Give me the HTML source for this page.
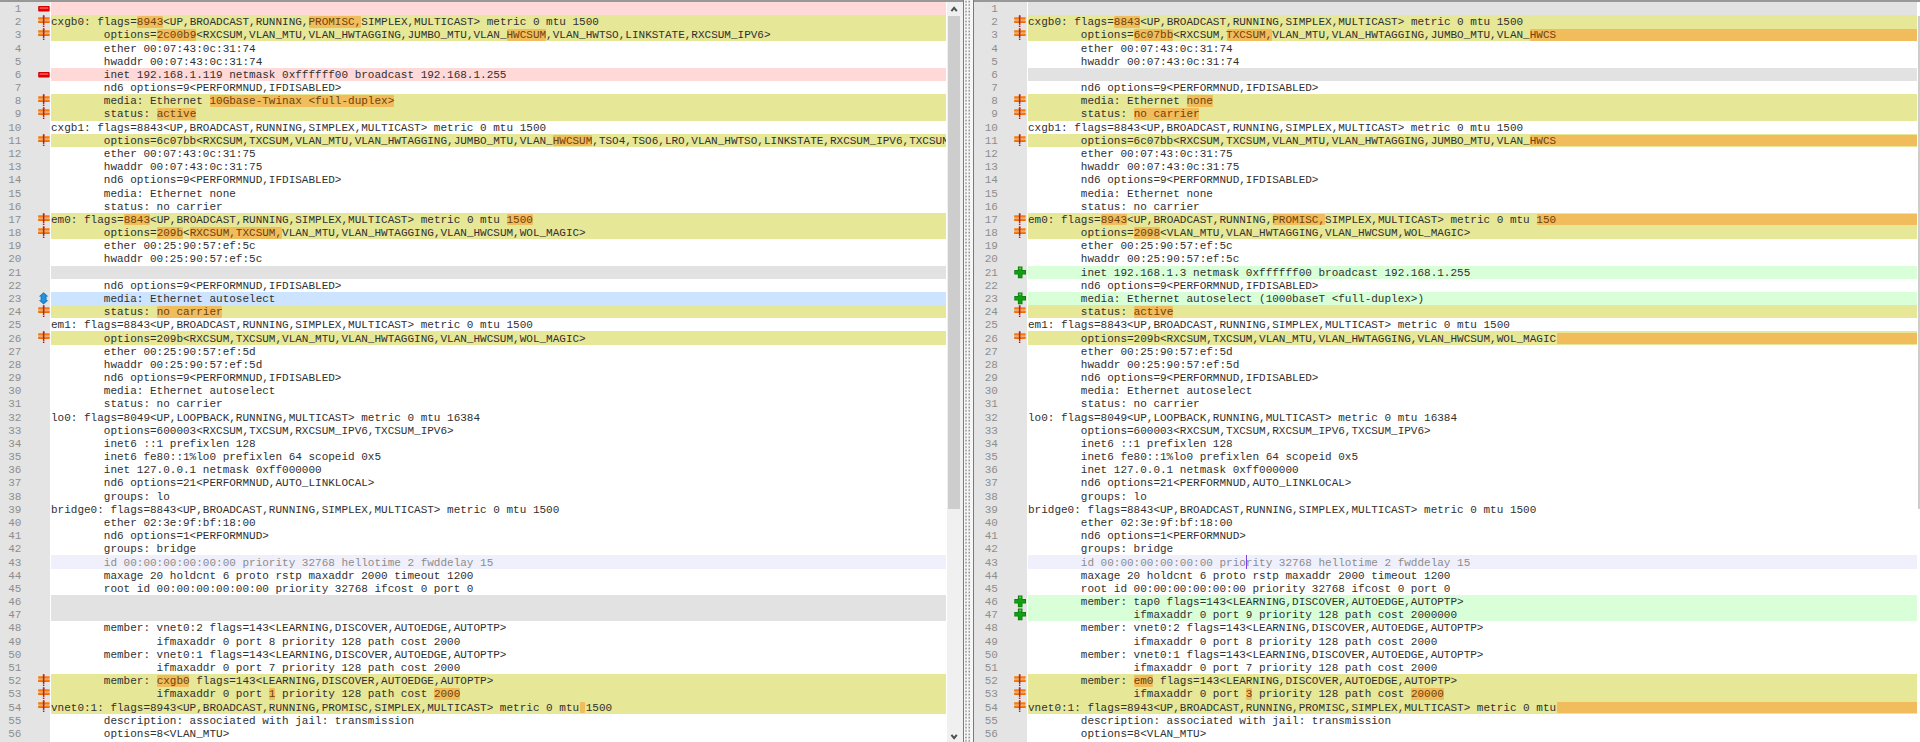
<!DOCTYPE html>
<html><head><meta charset="utf-8"><title>Compare</title><style>
html,body{margin:0;padding:0}
body{width:1920px;height:742px;overflow:hidden;background:#fff;position:relative;font-family:"Liberation Mono",monospace;font-size:11px;line-height:13.18px}
div{position:absolute;box-sizing:border-box}
.gut{top:0;height:742px;background:#E4E4E4}
.bd{height:13.18px}
.hl{height:11.48px;background:#F1BC5B;border-radius:1.2px}
.ln{width:30px;text-align:right;color:#8E8E8E;height:13.18px;white-space:pre}
.tx{white-space:pre;color:#303030;height:13.18px;overflow:hidden}
.tx i{font-style:normal;color:#70420C}
.tx.g{color:#8c8c8c}
.icw{width:12px;height:13px}
.ic{display:block}
</style></head><body>
<div class="gut" style="left:0px;width:50px"></div>
<div class="bd" style="left:50.5px;width:895.5px;top:1.90px;background:#FFD8D8"></div>
<div class="ln" style="left:-8.600000000000001px;top:3.00px">1</div>
<div class="icw" style="left:37.8px;top:1.90px"><svg class="ic" viewBox="0 0 12 13" width="12" height="13"><rect x="0.2" y="3.9" width="11.4" height="5.6" rx="0.8" fill="#C40000"/><rect x="0.9" y="4.6" width="10" height="4.2" rx="0.5" fill="#E60000"/><rect x="1.6" y="5.3" width="8.6" height="1.5" fill="#FF5A5A"/></svg></div>
<div class="bd" style="left:50.5px;width:895.5px;top:15.08px;background:#E7E798"></div>
<div class="hl" style="left:137.40px;width:25.60px;top:16.18px"></div>
<div class="hl" style="left:309.00px;width:52.00px;top:16.18px"></div>
<div class="ln" style="left:-8.600000000000001px;top:16.18px">2</div>
<div class="icw" style="left:37.8px;top:15.08px"><svg class="ic" viewBox="0 0 12 13" width="12" height="13"><rect x="0.4" y="4.3" width="11" height="1.6" fill="#F6B37A" opacity="0.75"/><rect x="0.2" y="2.25" width="11.4" height="2.3" rx="0.5" fill="#F4740A"/><rect x="0.2" y="5.65" width="11.4" height="2.4" rx="0.5" fill="#EE6A00"/><rect x="0.8" y="2.5" width="10.2" height="0.7" fill="#FF962E"/><rect x="0.8" y="5.9" width="10.2" height="0.7" fill="#FF8A20"/><rect x="4.9" y="0.4" width="1.5" height="9.5" fill="#9E2636"/><rect x="4.9" y="0.4" width="1.5" height="1.6" fill="#C8202C"/><rect x="4.9" y="10.6" width="1.5" height="1.4" fill="#C41020"/></svg></div>
<div class="tx" style="left:51px;top:16.18px;width:895px">cxgb0: flags=<i>8943</i>&lt;UP,BROADCAST,RUNNING,<i>PROMISC,</i>SIMPLEX,MULTICAST&gt; metric 0 mtu 1500</div>
<div class="bd" style="left:50.5px;width:895.5px;top:28.26px;background:#E7E798"></div>
<div class="hl" style="left:157.20px;width:38.80px;top:29.36px"></div>
<div class="hl" style="left:507.00px;width:38.80px;top:29.36px"></div>
<div class="ln" style="left:-8.600000000000001px;top:29.36px">3</div>
<div class="icw" style="left:37.8px;top:28.26px"><svg class="ic" viewBox="0 0 12 13" width="12" height="13"><rect x="0.4" y="4.3" width="11" height="1.6" fill="#F6B37A" opacity="0.75"/><rect x="0.2" y="2.25" width="11.4" height="2.3" rx="0.5" fill="#F4740A"/><rect x="0.2" y="5.65" width="11.4" height="2.4" rx="0.5" fill="#EE6A00"/><rect x="0.8" y="2.5" width="10.2" height="0.7" fill="#FF962E"/><rect x="0.8" y="5.9" width="10.2" height="0.7" fill="#FF8A20"/><rect x="4.9" y="0.4" width="1.5" height="9.5" fill="#9E2636"/><rect x="4.9" y="0.4" width="1.5" height="1.6" fill="#C8202C"/><rect x="4.9" y="10.6" width="1.5" height="1.4" fill="#C41020"/></svg></div>
<div class="tx" style="left:51px;top:29.36px;width:895px">        options=<i>2c00b9</i>&lt;RXCSUM,VLAN_MTU,VLAN_HWTAGGING,JUMBO_MTU,VLAN_<i>HWCSUM</i>,VLAN_HWTSO,LINKSTATE,RXCSUM_IPV6&gt;</div>
<div class="ln" style="left:-8.600000000000001px;top:42.54px">4</div>
<div class="tx" style="left:51px;top:42.54px;width:895px">        ether 00:07:43:0c:31:74</div>
<div class="ln" style="left:-8.600000000000001px;top:55.72px">5</div>
<div class="tx" style="left:51px;top:55.72px;width:895px">        hwaddr 00:07:43:0c:31:74</div>
<div class="bd" style="left:50.5px;width:895.5px;top:67.80px;background:#FFD8D8"></div>
<div class="ln" style="left:-8.600000000000001px;top:68.90px">6</div>
<div class="icw" style="left:37.8px;top:67.80px"><svg class="ic" viewBox="0 0 12 13" width="12" height="13"><rect x="0.2" y="3.9" width="11.4" height="5.6" rx="0.8" fill="#C40000"/><rect x="0.9" y="4.6" width="10" height="4.2" rx="0.5" fill="#E60000"/><rect x="1.6" y="5.3" width="8.6" height="1.5" fill="#FF5A5A"/></svg></div>
<div class="tx" style="left:51px;top:68.90px;width:895px">        inet 192.168.1.119 netmask 0xffffff00 broadcast 192.168.1.255</div>
<div class="ln" style="left:-8.600000000000001px;top:82.08px">7</div>
<div class="tx" style="left:51px;top:82.08px;width:895px">        nd6 options=9&lt;PERFORMNUD,IFDISABLED&gt;</div>
<div class="bd" style="left:50.5px;width:895.5px;top:94.16px;background:#E7E798"></div>
<div class="hl" style="left:210.00px;width:184.00px;top:95.26px"></div>
<div class="ln" style="left:-8.600000000000001px;top:95.26px">8</div>
<div class="icw" style="left:37.8px;top:94.16px"><svg class="ic" viewBox="0 0 12 13" width="12" height="13"><rect x="0.4" y="4.3" width="11" height="1.6" fill="#F6B37A" opacity="0.75"/><rect x="0.2" y="2.25" width="11.4" height="2.3" rx="0.5" fill="#F4740A"/><rect x="0.2" y="5.65" width="11.4" height="2.4" rx="0.5" fill="#EE6A00"/><rect x="0.8" y="2.5" width="10.2" height="0.7" fill="#FF962E"/><rect x="0.8" y="5.9" width="10.2" height="0.7" fill="#FF8A20"/><rect x="4.9" y="0.4" width="1.5" height="9.5" fill="#9E2636"/><rect x="4.9" y="0.4" width="1.5" height="1.6" fill="#C8202C"/><rect x="4.9" y="10.6" width="1.5" height="1.4" fill="#C41020"/></svg></div>
<div class="tx" style="left:51px;top:95.26px;width:895px">        media: Ethernet <i>10Gbase-Twinax &lt;full-duplex&gt;</i></div>
<div class="bd" style="left:50.5px;width:895.5px;top:107.34px;background:#E7E798"></div>
<div class="hl" style="left:157.20px;width:38.80px;top:108.44px"></div>
<div class="ln" style="left:-8.600000000000001px;top:108.44px">9</div>
<div class="icw" style="left:37.8px;top:107.34px"><svg class="ic" viewBox="0 0 12 13" width="12" height="13"><rect x="0.4" y="4.3" width="11" height="1.6" fill="#F6B37A" opacity="0.75"/><rect x="0.2" y="2.25" width="11.4" height="2.3" rx="0.5" fill="#F4740A"/><rect x="0.2" y="5.65" width="11.4" height="2.4" rx="0.5" fill="#EE6A00"/><rect x="0.8" y="2.5" width="10.2" height="0.7" fill="#FF962E"/><rect x="0.8" y="5.9" width="10.2" height="0.7" fill="#FF8A20"/><rect x="4.9" y="0.4" width="1.5" height="9.5" fill="#9E2636"/><rect x="4.9" y="0.4" width="1.5" height="1.6" fill="#C8202C"/><rect x="4.9" y="10.6" width="1.5" height="1.4" fill="#C41020"/></svg></div>
<div class="tx" style="left:51px;top:108.44px;width:895px">        status: <i>active</i></div>
<div class="ln" style="left:-8.600000000000001px;top:121.62px">10</div>
<div class="tx" style="left:51px;top:121.62px;width:895px">cxgb1: flags=8843&lt;UP,BROADCAST,RUNNING,SIMPLEX,MULTICAST&gt; metric 0 mtu 1500</div>
<div class="bd" style="left:50.5px;width:895.5px;top:133.70px;background:#E7E798"></div>
<div class="hl" style="left:553.20px;width:38.80px;top:134.80px"></div>
<div class="ln" style="left:-8.600000000000001px;top:134.80px">11</div>
<div class="icw" style="left:37.8px;top:133.70px"><svg class="ic" viewBox="0 0 12 13" width="12" height="13"><rect x="0.4" y="4.3" width="11" height="1.6" fill="#F6B37A" opacity="0.75"/><rect x="0.2" y="2.25" width="11.4" height="2.3" rx="0.5" fill="#F4740A"/><rect x="0.2" y="5.65" width="11.4" height="2.4" rx="0.5" fill="#EE6A00"/><rect x="0.8" y="2.5" width="10.2" height="0.7" fill="#FF962E"/><rect x="0.8" y="5.9" width="10.2" height="0.7" fill="#FF8A20"/><rect x="4.9" y="0.4" width="1.5" height="9.5" fill="#9E2636"/><rect x="4.9" y="0.4" width="1.5" height="1.6" fill="#C8202C"/><rect x="4.9" y="10.6" width="1.5" height="1.4" fill="#C41020"/></svg></div>
<div class="tx" style="left:51px;top:134.80px;width:895px">        options=6c07bb&lt;RXCSUM,TXCSUM,VLAN_MTU,VLAN_HWTAGGING,JUMBO_MTU,VLAN_<i>HWCSUM</i>,TSO4,TSO6,LRO,VLAN_HWTSO,LINKSTATE,RXCSUM_IPV6,TXCSUM_IPV6&gt;</div>
<div class="ln" style="left:-8.600000000000001px;top:147.98px">12</div>
<div class="tx" style="left:51px;top:147.98px;width:895px">        ether 00:07:43:0c:31:75</div>
<div class="ln" style="left:-8.600000000000001px;top:161.16px">13</div>
<div class="tx" style="left:51px;top:161.16px;width:895px">        hwaddr 00:07:43:0c:31:75</div>
<div class="ln" style="left:-8.600000000000001px;top:174.34px">14</div>
<div class="tx" style="left:51px;top:174.34px;width:895px">        nd6 options=9&lt;PERFORMNUD,IFDISABLED&gt;</div>
<div class="ln" style="left:-8.600000000000001px;top:187.52px">15</div>
<div class="tx" style="left:51px;top:187.52px;width:895px">        media: Ethernet none</div>
<div class="ln" style="left:-8.600000000000001px;top:200.70px">16</div>
<div class="tx" style="left:51px;top:200.70px;width:895px">        status: no carrier</div>
<div class="bd" style="left:50.5px;width:895.5px;top:212.78px;background:#E7E798"></div>
<div class="hl" style="left:124.20px;width:25.60px;top:213.88px"></div>
<div class="hl" style="left:507.00px;width:25.60px;top:213.88px"></div>
<div class="ln" style="left:-8.600000000000001px;top:213.88px">17</div>
<div class="icw" style="left:37.8px;top:212.78px"><svg class="ic" viewBox="0 0 12 13" width="12" height="13"><rect x="0.4" y="4.3" width="11" height="1.6" fill="#F6B37A" opacity="0.75"/><rect x="0.2" y="2.25" width="11.4" height="2.3" rx="0.5" fill="#F4740A"/><rect x="0.2" y="5.65" width="11.4" height="2.4" rx="0.5" fill="#EE6A00"/><rect x="0.8" y="2.5" width="10.2" height="0.7" fill="#FF962E"/><rect x="0.8" y="5.9" width="10.2" height="0.7" fill="#FF8A20"/><rect x="4.9" y="0.4" width="1.5" height="9.5" fill="#9E2636"/><rect x="4.9" y="0.4" width="1.5" height="1.6" fill="#C8202C"/><rect x="4.9" y="10.6" width="1.5" height="1.4" fill="#C41020"/></svg></div>
<div class="tx" style="left:51px;top:213.88px;width:895px">em0: flags=<i>8843</i>&lt;UP,BROADCAST,RUNNING,SIMPLEX,MULTICAST&gt; metric 0 mtu <i>1500</i></div>
<div class="bd" style="left:50.5px;width:895.5px;top:225.96px;background:#E7E798"></div>
<div class="hl" style="left:157.20px;width:25.60px;top:227.06px"></div>
<div class="hl" style="left:190.20px;width:91.60px;top:227.06px"></div>
<div class="ln" style="left:-8.600000000000001px;top:227.06px">18</div>
<div class="icw" style="left:37.8px;top:225.96px"><svg class="ic" viewBox="0 0 12 13" width="12" height="13"><rect x="0.4" y="4.3" width="11" height="1.6" fill="#F6B37A" opacity="0.75"/><rect x="0.2" y="2.25" width="11.4" height="2.3" rx="0.5" fill="#F4740A"/><rect x="0.2" y="5.65" width="11.4" height="2.4" rx="0.5" fill="#EE6A00"/><rect x="0.8" y="2.5" width="10.2" height="0.7" fill="#FF962E"/><rect x="0.8" y="5.9" width="10.2" height="0.7" fill="#FF8A20"/><rect x="4.9" y="0.4" width="1.5" height="9.5" fill="#9E2636"/><rect x="4.9" y="0.4" width="1.5" height="1.6" fill="#C8202C"/><rect x="4.9" y="10.6" width="1.5" height="1.4" fill="#C41020"/></svg></div>
<div class="tx" style="left:51px;top:227.06px;width:895px">        options=<i>209b</i>&lt;<i>RXCSUM,TXCSUM,</i>VLAN_MTU,VLAN_HWTAGGING,VLAN_HWCSUM,WOL_MAGIC&gt;</div>
<div class="ln" style="left:-8.600000000000001px;top:240.24px">19</div>
<div class="tx" style="left:51px;top:240.24px;width:895px">        ether 00:25:90:57:ef:5c</div>
<div class="ln" style="left:-8.600000000000001px;top:253.42px">20</div>
<div class="tx" style="left:51px;top:253.42px;width:895px">        hwaddr 00:25:90:57:ef:5c</div>
<div class="bd" style="left:50.5px;width:895.5px;top:265.50px;background:#E2E2E2"></div>
<div class="ln" style="left:-8.600000000000001px;top:266.60px">21</div>
<div class="ln" style="left:-8.600000000000001px;top:279.78px">22</div>
<div class="tx" style="left:51px;top:279.78px;width:895px">        nd6 options=9&lt;PERFORMNUD,IFDISABLED&gt;</div>
<div class="bd" style="left:50.5px;width:895.5px;top:291.86px;background:#CCE4FF"></div>
<div class="ln" style="left:-8.600000000000001px;top:292.96px">23</div>
<div class="icw" style="left:37.8px;top:291.86px"><svg class="ic" viewBox="0 0 12 13" width="12" height="13"><path d="M5.6 0.2L10.4 4.4H8.6V8.2H10.4L5.6 12.4L0.8 8.2H2.6V4.4H0.8Z" fill="#1A7CC8"/><path d="M5.6 1.6L8 3.8H7.4V8.8H8L5.6 11L3.2 8.8H3.8V3.8H3.2Z" fill="#2492DC"/></svg></div>
<div class="tx" style="left:51px;top:292.96px;width:895px">        media: Ethernet autoselect</div>
<div class="bd" style="left:50.5px;width:895.5px;top:305.04px;background:#E7E798"></div>
<div class="hl" style="left:157.20px;width:65.20px;top:306.14px"></div>
<div class="ln" style="left:-8.600000000000001px;top:306.14px">24</div>
<div class="icw" style="left:37.8px;top:305.04px"><svg class="ic" viewBox="0 0 12 13" width="12" height="13"><rect x="0.4" y="4.3" width="11" height="1.6" fill="#F6B37A" opacity="0.75"/><rect x="0.2" y="2.25" width="11.4" height="2.3" rx="0.5" fill="#F4740A"/><rect x="0.2" y="5.65" width="11.4" height="2.4" rx="0.5" fill="#EE6A00"/><rect x="0.8" y="2.5" width="10.2" height="0.7" fill="#FF962E"/><rect x="0.8" y="5.9" width="10.2" height="0.7" fill="#FF8A20"/><rect x="4.9" y="0.4" width="1.5" height="9.5" fill="#9E2636"/><rect x="4.9" y="0.4" width="1.5" height="1.6" fill="#C8202C"/><rect x="4.9" y="10.6" width="1.5" height="1.4" fill="#C41020"/></svg></div>
<div class="tx" style="left:51px;top:306.14px;width:895px">        status: <i>no carrier</i></div>
<div class="ln" style="left:-8.600000000000001px;top:319.32px">25</div>
<div class="tx" style="left:51px;top:319.32px;width:895px">em1: flags=8843&lt;UP,BROADCAST,RUNNING,SIMPLEX,MULTICAST&gt; metric 0 mtu 1500</div>
<div class="bd" style="left:50.5px;width:895.5px;top:331.40px;background:#E7E798"></div>
<div class="ln" style="left:-8.600000000000001px;top:332.50px">26</div>
<div class="icw" style="left:37.8px;top:331.40px"><svg class="ic" viewBox="0 0 12 13" width="12" height="13"><rect x="0.4" y="4.3" width="11" height="1.6" fill="#F6B37A" opacity="0.75"/><rect x="0.2" y="2.25" width="11.4" height="2.3" rx="0.5" fill="#F4740A"/><rect x="0.2" y="5.65" width="11.4" height="2.4" rx="0.5" fill="#EE6A00"/><rect x="0.8" y="2.5" width="10.2" height="0.7" fill="#FF962E"/><rect x="0.8" y="5.9" width="10.2" height="0.7" fill="#FF8A20"/><rect x="4.9" y="0.4" width="1.5" height="9.5" fill="#9E2636"/><rect x="4.9" y="0.4" width="1.5" height="1.6" fill="#C8202C"/><rect x="4.9" y="10.6" width="1.5" height="1.4" fill="#C41020"/></svg></div>
<div class="tx" style="left:51px;top:332.50px;width:895px">        options=209b&lt;RXCSUM,TXCSUM,VLAN_MTU,VLAN_HWTAGGING,VLAN_HWCSUM,WOL_MAGIC&gt;</div>
<div class="ln" style="left:-8.600000000000001px;top:345.68px">27</div>
<div class="tx" style="left:51px;top:345.68px;width:895px">        ether 00:25:90:57:ef:5d</div>
<div class="ln" style="left:-8.600000000000001px;top:358.86px">28</div>
<div class="tx" style="left:51px;top:358.86px;width:895px">        hwaddr 00:25:90:57:ef:5d</div>
<div class="ln" style="left:-8.600000000000001px;top:372.04px">29</div>
<div class="tx" style="left:51px;top:372.04px;width:895px">        nd6 options=9&lt;PERFORMNUD,IFDISABLED&gt;</div>
<div class="ln" style="left:-8.600000000000001px;top:385.22px">30</div>
<div class="tx" style="left:51px;top:385.22px;width:895px">        media: Ethernet autoselect</div>
<div class="ln" style="left:-8.600000000000001px;top:398.40px">31</div>
<div class="tx" style="left:51px;top:398.40px;width:895px">        status: no carrier</div>
<div class="ln" style="left:-8.600000000000001px;top:411.58px">32</div>
<div class="tx" style="left:51px;top:411.58px;width:895px">lo0: flags=8049&lt;UP,LOOPBACK,RUNNING,MULTICAST&gt; metric 0 mtu 16384</div>
<div class="ln" style="left:-8.600000000000001px;top:424.76px">33</div>
<div class="tx" style="left:51px;top:424.76px;width:895px">        options=600003&lt;RXCSUM,TXCSUM,RXCSUM_IPV6,TXCSUM_IPV6&gt;</div>
<div class="ln" style="left:-8.600000000000001px;top:437.94px">34</div>
<div class="tx" style="left:51px;top:437.94px;width:895px">        inet6 ::1 prefixlen 128</div>
<div class="ln" style="left:-8.600000000000001px;top:451.12px">35</div>
<div class="tx" style="left:51px;top:451.12px;width:895px">        inet6 fe80::1%lo0 prefixlen 64 scopeid 0x5</div>
<div class="ln" style="left:-8.600000000000001px;top:464.30px">36</div>
<div class="tx" style="left:51px;top:464.30px;width:895px">        inet 127.0.0.1 netmask 0xff000000</div>
<div class="ln" style="left:-8.600000000000001px;top:477.48px">37</div>
<div class="tx" style="left:51px;top:477.48px;width:895px">        nd6 options=21&lt;PERFORMNUD,AUTO_LINKLOCAL&gt;</div>
<div class="ln" style="left:-8.600000000000001px;top:490.66px">38</div>
<div class="tx" style="left:51px;top:490.66px;width:895px">        groups: lo</div>
<div class="ln" style="left:-8.600000000000001px;top:503.84px">39</div>
<div class="tx" style="left:51px;top:503.84px;width:895px">bridge0: flags=8843&lt;UP,BROADCAST,RUNNING,SIMPLEX,MULTICAST&gt; metric 0 mtu 1500</div>
<div class="ln" style="left:-8.600000000000001px;top:517.02px">40</div>
<div class="tx" style="left:51px;top:517.02px;width:895px">        ether 02:3e:9f:bf:18:00</div>
<div class="ln" style="left:-8.600000000000001px;top:530.20px">41</div>
<div class="tx" style="left:51px;top:530.20px;width:895px">        nd6 options=1&lt;PERFORMNUD&gt;</div>
<div class="ln" style="left:-8.600000000000001px;top:543.38px">42</div>
<div class="tx" style="left:51px;top:543.38px;width:895px">        groups: bridge</div>
<div class="bd" style="left:50.5px;width:895.5px;top:555.46px;background:#F0F0FC"></div>
<div class="ln" style="left:-8.600000000000001px;top:556.56px">43</div>
<div class="tx g" style="left:51px;top:556.56px;width:895px">        id 00:00:00:00:00:00 priority 32768 hellotime 2 fwddelay 15</div>
<div class="ln" style="left:-8.600000000000001px;top:569.74px">44</div>
<div class="tx" style="left:51px;top:569.74px;width:895px">        maxage 20 holdcnt 6 proto rstp maxaddr 2000 timeout 1200</div>
<div class="ln" style="left:-8.600000000000001px;top:582.92px">45</div>
<div class="tx" style="left:51px;top:582.92px;width:895px">        root id 00:00:00:00:00:00 priority 32768 ifcost 0 port 0</div>
<div class="bd" style="left:50.5px;width:895.5px;top:595.00px;background:#E2E2E2"></div>
<div class="ln" style="left:-8.600000000000001px;top:596.10px">46</div>
<div class="bd" style="left:50.5px;width:895.5px;top:608.18px;background:#E2E2E2"></div>
<div class="ln" style="left:-8.600000000000001px;top:609.28px">47</div>
<div class="ln" style="left:-8.600000000000001px;top:622.46px">48</div>
<div class="tx" style="left:51px;top:622.46px;width:895px">        member: vnet0:2 flags=143&lt;LEARNING,DISCOVER,AUTOEDGE,AUTOPTP&gt;</div>
<div class="ln" style="left:-8.600000000000001px;top:635.64px">49</div>
<div class="tx" style="left:51px;top:635.64px;width:895px">                ifmaxaddr 0 port 8 priority 128 path cost 2000</div>
<div class="ln" style="left:-8.600000000000001px;top:648.82px">50</div>
<div class="tx" style="left:51px;top:648.82px;width:895px">        member: vnet0:1 flags=143&lt;LEARNING,DISCOVER,AUTOEDGE,AUTOPTP&gt;</div>
<div class="ln" style="left:-8.600000000000001px;top:662.00px">51</div>
<div class="tx" style="left:51px;top:662.00px;width:895px">                ifmaxaddr 0 port 7 priority 128 path cost 2000</div>
<div class="bd" style="left:50.5px;width:895.5px;top:674.08px;background:#E7E798"></div>
<div class="hl" style="left:157.20px;width:32.20px;top:675.18px"></div>
<div class="ln" style="left:-8.600000000000001px;top:675.18px">52</div>
<div class="icw" style="left:37.8px;top:674.08px"><svg class="ic" viewBox="0 0 12 13" width="12" height="13"><rect x="0.4" y="4.3" width="11" height="1.6" fill="#F6B37A" opacity="0.75"/><rect x="0.2" y="2.25" width="11.4" height="2.3" rx="0.5" fill="#F4740A"/><rect x="0.2" y="5.65" width="11.4" height="2.4" rx="0.5" fill="#EE6A00"/><rect x="0.8" y="2.5" width="10.2" height="0.7" fill="#FF962E"/><rect x="0.8" y="5.9" width="10.2" height="0.7" fill="#FF8A20"/><rect x="4.9" y="0.4" width="1.5" height="9.5" fill="#9E2636"/><rect x="4.9" y="0.4" width="1.5" height="1.6" fill="#C8202C"/><rect x="4.9" y="10.6" width="1.5" height="1.4" fill="#C41020"/></svg></div>
<div class="tx" style="left:51px;top:675.18px;width:895px">        member: <i>cxgb0</i> flags=143&lt;LEARNING,DISCOVER,AUTOEDGE,AUTOPTP&gt;</div>
<div class="bd" style="left:50.5px;width:895.5px;top:687.26px;background:#E7E798"></div>
<div class="hl" style="left:269.40px;width:5.80px;top:688.36px"></div>
<div class="hl" style="left:434.40px;width:25.60px;top:688.36px"></div>
<div class="ln" style="left:-8.600000000000001px;top:688.36px">53</div>
<div class="icw" style="left:37.8px;top:687.26px"><svg class="ic" viewBox="0 0 12 13" width="12" height="13"><rect x="0.4" y="4.3" width="11" height="1.6" fill="#F6B37A" opacity="0.75"/><rect x="0.2" y="2.25" width="11.4" height="2.3" rx="0.5" fill="#F4740A"/><rect x="0.2" y="5.65" width="11.4" height="2.4" rx="0.5" fill="#EE6A00"/><rect x="0.8" y="2.5" width="10.2" height="0.7" fill="#FF962E"/><rect x="0.8" y="5.9" width="10.2" height="0.7" fill="#FF8A20"/><rect x="4.9" y="0.4" width="1.5" height="9.5" fill="#9E2636"/><rect x="4.9" y="0.4" width="1.5" height="1.6" fill="#C8202C"/><rect x="4.9" y="10.6" width="1.5" height="1.4" fill="#C41020"/></svg></div>
<div class="tx" style="left:51px;top:688.36px;width:895px">                ifmaxaddr 0 port <i>1</i> priority 128 path cost <i>2000</i></div>
<div class="bd" style="left:50.5px;width:895.5px;top:700.44px;background:#E7E798"></div>
<div class="hl" style="left:579.60px;width:5.80px;top:701.54px"></div>
<div class="ln" style="left:-8.600000000000001px;top:701.54px">54</div>
<div class="icw" style="left:37.8px;top:700.44px"><svg class="ic" viewBox="0 0 12 13" width="12" height="13"><rect x="0.4" y="4.3" width="11" height="1.6" fill="#F6B37A" opacity="0.75"/><rect x="0.2" y="2.25" width="11.4" height="2.3" rx="0.5" fill="#F4740A"/><rect x="0.2" y="5.65" width="11.4" height="2.4" rx="0.5" fill="#EE6A00"/><rect x="0.8" y="2.5" width="10.2" height="0.7" fill="#FF962E"/><rect x="0.8" y="5.9" width="10.2" height="0.7" fill="#FF8A20"/><rect x="4.9" y="0.4" width="1.5" height="9.5" fill="#9E2636"/><rect x="4.9" y="0.4" width="1.5" height="1.6" fill="#C8202C"/><rect x="4.9" y="10.6" width="1.5" height="1.4" fill="#C41020"/></svg></div>
<div class="tx" style="left:51px;top:701.54px;width:895px">vnet0:1: flags=8943&lt;UP,BROADCAST,RUNNING,PROMISC,SIMPLEX,MULTICAST&gt; metric 0 mtu<i> </i>1500</div>
<div class="ln" style="left:-8.600000000000001px;top:714.72px">55</div>
<div class="tx" style="left:51px;top:714.72px;width:895px">        description: associated with jail: transmission</div>
<div class="ln" style="left:-8.600000000000001px;top:727.90px">56</div>
<div class="tx" style="left:51px;top:727.90px;width:895px">        options=8&lt;VLAN_MTU&gt;</div>
<div class="gut" style="left:974px;width:53px"></div>
<div class="bd" style="left:1027.5px;width:889.5px;top:1.90px;background:#E2E2E2"></div>
<div class="ln" style="left:967.9px;top:3.00px">1</div>
<div class="bd" style="left:1027.5px;width:889.5px;top:15.08px;background:#E7E798"></div>
<div class="hl" style="left:1114.40px;width:25.60px;top:16.18px"></div>
<div class="ln" style="left:967.9px;top:16.18px">2</div>
<div class="icw" style="left:1014.4px;top:15.08px"><svg class="ic" viewBox="0 0 12 13" width="12" height="13"><rect x="0.4" y="4.3" width="11" height="1.6" fill="#F6B37A" opacity="0.75"/><rect x="0.2" y="2.25" width="11.4" height="2.3" rx="0.5" fill="#F4740A"/><rect x="0.2" y="5.65" width="11.4" height="2.4" rx="0.5" fill="#EE6A00"/><rect x="0.8" y="2.5" width="10.2" height="0.7" fill="#FF962E"/><rect x="0.8" y="5.9" width="10.2" height="0.7" fill="#FF8A20"/><rect x="4.9" y="0.4" width="1.5" height="9.5" fill="#9E2636"/><rect x="4.9" y="0.4" width="1.5" height="1.6" fill="#C8202C"/><rect x="4.9" y="10.6" width="1.5" height="1.4" fill="#C41020"/></svg></div>
<div class="tx" style="left:1028px;top:16.18px;width:889px">cxgb0: flags=<i>8843</i>&lt;UP,BROADCAST,RUNNING,SIMPLEX,MULTICAST&gt; metric 0 mtu 1500</div>
<div class="bd" style="left:1027.5px;width:889.5px;top:28.26px;background:#E7E798"></div>
<div class="hl" style="left:1134.20px;width:38.80px;top:29.36px"></div>
<div class="hl" style="left:1226.60px;width:45.40px;top:29.36px"></div>
<div class="hl" style="left:1530.20px;width:386.80px;top:29.36px;border-radius:1px 0 0 1px"></div>
<div class="ln" style="left:967.9px;top:29.36px">3</div>
<div class="icw" style="left:1014.4px;top:28.26px"><svg class="ic" viewBox="0 0 12 13" width="12" height="13"><rect x="0.4" y="4.3" width="11" height="1.6" fill="#F6B37A" opacity="0.75"/><rect x="0.2" y="2.25" width="11.4" height="2.3" rx="0.5" fill="#F4740A"/><rect x="0.2" y="5.65" width="11.4" height="2.4" rx="0.5" fill="#EE6A00"/><rect x="0.8" y="2.5" width="10.2" height="0.7" fill="#FF962E"/><rect x="0.8" y="5.9" width="10.2" height="0.7" fill="#FF8A20"/><rect x="4.9" y="0.4" width="1.5" height="9.5" fill="#9E2636"/><rect x="4.9" y="0.4" width="1.5" height="1.6" fill="#C8202C"/><rect x="4.9" y="10.6" width="1.5" height="1.4" fill="#C41020"/></svg></div>
<div class="tx" style="left:1028px;top:29.36px;width:889px">        options=<i>6c07bb</i>&lt;RXCSUM,<i>TXCSUM,</i>VLAN_MTU,VLAN_HWTAGGING,JUMBO_MTU,VLAN_<i>HWCS</i></div>
<div class="ln" style="left:967.9px;top:42.54px">4</div>
<div class="tx" style="left:1028px;top:42.54px;width:889px">        ether 00:07:43:0c:31:74</div>
<div class="ln" style="left:967.9px;top:55.72px">5</div>
<div class="tx" style="left:1028px;top:55.72px;width:889px">        hwaddr 00:07:43:0c:31:74</div>
<div class="bd" style="left:1027.5px;width:889.5px;top:67.80px;background:#E2E2E2"></div>
<div class="ln" style="left:967.9px;top:68.90px">6</div>
<div class="ln" style="left:967.9px;top:82.08px">7</div>
<div class="tx" style="left:1028px;top:82.08px;width:889px">        nd6 options=9&lt;PERFORMNUD,IFDISABLED&gt;</div>
<div class="bd" style="left:1027.5px;width:889.5px;top:94.16px;background:#E7E798"></div>
<div class="hl" style="left:1187.00px;width:25.60px;top:95.26px"></div>
<div class="ln" style="left:967.9px;top:95.26px">8</div>
<div class="icw" style="left:1014.4px;top:94.16px"><svg class="ic" viewBox="0 0 12 13" width="12" height="13"><rect x="0.4" y="4.3" width="11" height="1.6" fill="#F6B37A" opacity="0.75"/><rect x="0.2" y="2.25" width="11.4" height="2.3" rx="0.5" fill="#F4740A"/><rect x="0.2" y="5.65" width="11.4" height="2.4" rx="0.5" fill="#EE6A00"/><rect x="0.8" y="2.5" width="10.2" height="0.7" fill="#FF962E"/><rect x="0.8" y="5.9" width="10.2" height="0.7" fill="#FF8A20"/><rect x="4.9" y="0.4" width="1.5" height="9.5" fill="#9E2636"/><rect x="4.9" y="0.4" width="1.5" height="1.6" fill="#C8202C"/><rect x="4.9" y="10.6" width="1.5" height="1.4" fill="#C41020"/></svg></div>
<div class="tx" style="left:1028px;top:95.26px;width:889px">        media: Ethernet <i>none</i></div>
<div class="bd" style="left:1027.5px;width:889.5px;top:107.34px;background:#E7E798"></div>
<div class="hl" style="left:1134.20px;width:65.20px;top:108.44px"></div>
<div class="ln" style="left:967.9px;top:108.44px">9</div>
<div class="icw" style="left:1014.4px;top:107.34px"><svg class="ic" viewBox="0 0 12 13" width="12" height="13"><rect x="0.4" y="4.3" width="11" height="1.6" fill="#F6B37A" opacity="0.75"/><rect x="0.2" y="2.25" width="11.4" height="2.3" rx="0.5" fill="#F4740A"/><rect x="0.2" y="5.65" width="11.4" height="2.4" rx="0.5" fill="#EE6A00"/><rect x="0.8" y="2.5" width="10.2" height="0.7" fill="#FF962E"/><rect x="0.8" y="5.9" width="10.2" height="0.7" fill="#FF8A20"/><rect x="4.9" y="0.4" width="1.5" height="9.5" fill="#9E2636"/><rect x="4.9" y="0.4" width="1.5" height="1.6" fill="#C8202C"/><rect x="4.9" y="10.6" width="1.5" height="1.4" fill="#C41020"/></svg></div>
<div class="tx" style="left:1028px;top:108.44px;width:889px">        status: <i>no carrier</i></div>
<div class="ln" style="left:967.9px;top:121.62px">10</div>
<div class="tx" style="left:1028px;top:121.62px;width:889px">cxgb1: flags=8843&lt;UP,BROADCAST,RUNNING,SIMPLEX,MULTICAST&gt; metric 0 mtu 1500</div>
<div class="bd" style="left:1027.5px;width:889.5px;top:133.70px;background:#E7E798"></div>
<div class="hl" style="left:1530.20px;width:386.80px;top:134.80px;border-radius:1px 0 0 1px"></div>
<div class="ln" style="left:967.9px;top:134.80px">11</div>
<div class="icw" style="left:1014.4px;top:133.70px"><svg class="ic" viewBox="0 0 12 13" width="12" height="13"><rect x="0.4" y="4.3" width="11" height="1.6" fill="#F6B37A" opacity="0.75"/><rect x="0.2" y="2.25" width="11.4" height="2.3" rx="0.5" fill="#F4740A"/><rect x="0.2" y="5.65" width="11.4" height="2.4" rx="0.5" fill="#EE6A00"/><rect x="0.8" y="2.5" width="10.2" height="0.7" fill="#FF962E"/><rect x="0.8" y="5.9" width="10.2" height="0.7" fill="#FF8A20"/><rect x="4.9" y="0.4" width="1.5" height="9.5" fill="#9E2636"/><rect x="4.9" y="0.4" width="1.5" height="1.6" fill="#C8202C"/><rect x="4.9" y="10.6" width="1.5" height="1.4" fill="#C41020"/></svg></div>
<div class="tx" style="left:1028px;top:134.80px;width:889px">        options=6c07bb&lt;RXCSUM,TXCSUM,VLAN_MTU,VLAN_HWTAGGING,JUMBO_MTU,VLAN_<i>HWCS</i></div>
<div class="ln" style="left:967.9px;top:147.98px">12</div>
<div class="tx" style="left:1028px;top:147.98px;width:889px">        ether 00:07:43:0c:31:75</div>
<div class="ln" style="left:967.9px;top:161.16px">13</div>
<div class="tx" style="left:1028px;top:161.16px;width:889px">        hwaddr 00:07:43:0c:31:75</div>
<div class="ln" style="left:967.9px;top:174.34px">14</div>
<div class="tx" style="left:1028px;top:174.34px;width:889px">        nd6 options=9&lt;PERFORMNUD,IFDISABLED&gt;</div>
<div class="ln" style="left:967.9px;top:187.52px">15</div>
<div class="tx" style="left:1028px;top:187.52px;width:889px">        media: Ethernet none</div>
<div class="ln" style="left:967.9px;top:200.70px">16</div>
<div class="tx" style="left:1028px;top:200.70px;width:889px">        status: no carrier</div>
<div class="bd" style="left:1027.5px;width:889.5px;top:212.78px;background:#E7E798"></div>
<div class="hl" style="left:1101.20px;width:25.60px;top:213.88px"></div>
<div class="hl" style="left:1272.80px;width:52.00px;top:213.88px"></div>
<div class="hl" style="left:1536.80px;width:380.20px;top:213.88px;border-radius:1px 0 0 1px"></div>
<div class="ln" style="left:967.9px;top:213.88px">17</div>
<div class="icw" style="left:1014.4px;top:212.78px"><svg class="ic" viewBox="0 0 12 13" width="12" height="13"><rect x="0.4" y="4.3" width="11" height="1.6" fill="#F6B37A" opacity="0.75"/><rect x="0.2" y="2.25" width="11.4" height="2.3" rx="0.5" fill="#F4740A"/><rect x="0.2" y="5.65" width="11.4" height="2.4" rx="0.5" fill="#EE6A00"/><rect x="0.8" y="2.5" width="10.2" height="0.7" fill="#FF962E"/><rect x="0.8" y="5.9" width="10.2" height="0.7" fill="#FF8A20"/><rect x="4.9" y="0.4" width="1.5" height="9.5" fill="#9E2636"/><rect x="4.9" y="0.4" width="1.5" height="1.6" fill="#C8202C"/><rect x="4.9" y="10.6" width="1.5" height="1.4" fill="#C41020"/></svg></div>
<div class="tx" style="left:1028px;top:213.88px;width:889px">em0: flags=<i>8943</i>&lt;UP,BROADCAST,RUNNING,<i>PROMISC,</i>SIMPLEX,MULTICAST&gt; metric 0 mtu <i>150</i></div>
<div class="bd" style="left:1027.5px;width:889.5px;top:225.96px;background:#E7E798"></div>
<div class="hl" style="left:1134.20px;width:25.60px;top:227.06px"></div>
<div class="ln" style="left:967.9px;top:227.06px">18</div>
<div class="icw" style="left:1014.4px;top:225.96px"><svg class="ic" viewBox="0 0 12 13" width="12" height="13"><rect x="0.4" y="4.3" width="11" height="1.6" fill="#F6B37A" opacity="0.75"/><rect x="0.2" y="2.25" width="11.4" height="2.3" rx="0.5" fill="#F4740A"/><rect x="0.2" y="5.65" width="11.4" height="2.4" rx="0.5" fill="#EE6A00"/><rect x="0.8" y="2.5" width="10.2" height="0.7" fill="#FF962E"/><rect x="0.8" y="5.9" width="10.2" height="0.7" fill="#FF8A20"/><rect x="4.9" y="0.4" width="1.5" height="9.5" fill="#9E2636"/><rect x="4.9" y="0.4" width="1.5" height="1.6" fill="#C8202C"/><rect x="4.9" y="10.6" width="1.5" height="1.4" fill="#C41020"/></svg></div>
<div class="tx" style="left:1028px;top:227.06px;width:889px">        options=<i>2098</i>&lt;VLAN_MTU,VLAN_HWTAGGING,VLAN_HWCSUM,WOL_MAGIC&gt;</div>
<div class="ln" style="left:967.9px;top:240.24px">19</div>
<div class="tx" style="left:1028px;top:240.24px;width:889px">        ether 00:25:90:57:ef:5c</div>
<div class="ln" style="left:967.9px;top:253.42px">20</div>
<div class="tx" style="left:1028px;top:253.42px;width:889px">        hwaddr 00:25:90:57:ef:5c</div>
<div class="bd" style="left:1027.5px;width:889.5px;top:265.50px;background:#D8FFD8"></div>
<div class="ln" style="left:967.9px;top:266.60px">21</div>
<div class="icw" style="left:1014.4px;top:265.50px"><svg class="ic" viewBox="0 0 12 13" width="12" height="13"><path d="M3.9 0.4h4.6v3.6h3.5v4.6h-3.5v3.6h-4.6v-3.6h-3.6v-4.6h3.6z" fill="#0C7C0C"/><path d="M4.7 1.2h3v3.6h3.5v3h-3.5v3.6h-3v-3.6h-3.6v-3h3.6z" fill="#10A010"/><path d="M5.2 1.7h2v1.4h-2z" fill="#5CD05C"/></svg></div>
<div class="tx" style="left:1028px;top:266.60px;width:889px">        inet 192.168.1.3 netmask 0xffffff00 broadcast 192.168.1.255</div>
<div class="ln" style="left:967.9px;top:279.78px">22</div>
<div class="tx" style="left:1028px;top:279.78px;width:889px">        nd6 options=9&lt;PERFORMNUD,IFDISABLED&gt;</div>
<div class="bd" style="left:1027.5px;width:889.5px;top:291.86px;background:#D8FFD8"></div>
<div class="ln" style="left:967.9px;top:292.96px">23</div>
<div class="icw" style="left:1014.4px;top:291.86px"><svg class="ic" viewBox="0 0 12 13" width="12" height="13"><path d="M3.9 0.4h4.6v3.6h3.5v4.6h-3.5v3.6h-4.6v-3.6h-3.6v-4.6h3.6z" fill="#0C7C0C"/><path d="M4.7 1.2h3v3.6h3.5v3h-3.5v3.6h-3v-3.6h-3.6v-3h3.6z" fill="#10A010"/><path d="M5.2 1.7h2v1.4h-2z" fill="#5CD05C"/></svg></div>
<div class="tx" style="left:1028px;top:292.96px;width:889px">        media: Ethernet autoselect (1000baseT &lt;full-duplex&gt;)</div>
<div class="bd" style="left:1027.5px;width:889.5px;top:305.04px;background:#E7E798"></div>
<div class="hl" style="left:1134.20px;width:38.80px;top:306.14px"></div>
<div class="ln" style="left:967.9px;top:306.14px">24</div>
<div class="icw" style="left:1014.4px;top:305.04px"><svg class="ic" viewBox="0 0 12 13" width="12" height="13"><rect x="0.4" y="4.3" width="11" height="1.6" fill="#F6B37A" opacity="0.75"/><rect x="0.2" y="2.25" width="11.4" height="2.3" rx="0.5" fill="#F4740A"/><rect x="0.2" y="5.65" width="11.4" height="2.4" rx="0.5" fill="#EE6A00"/><rect x="0.8" y="2.5" width="10.2" height="0.7" fill="#FF962E"/><rect x="0.8" y="5.9" width="10.2" height="0.7" fill="#FF8A20"/><rect x="4.9" y="0.4" width="1.5" height="9.5" fill="#9E2636"/><rect x="4.9" y="0.4" width="1.5" height="1.6" fill="#C8202C"/><rect x="4.9" y="10.6" width="1.5" height="1.4" fill="#C41020"/></svg></div>
<div class="tx" style="left:1028px;top:306.14px;width:889px">        status: <i>active</i></div>
<div class="ln" style="left:967.9px;top:319.32px">25</div>
<div class="tx" style="left:1028px;top:319.32px;width:889px">em1: flags=8843&lt;UP,BROADCAST,RUNNING,SIMPLEX,MULTICAST&gt; metric 0 mtu 1500</div>
<div class="bd" style="left:1027.5px;width:889.5px;top:331.40px;background:#E7E798"></div>
<div class="hl" style="left:1556.60px;width:360.40px;top:332.50px;border-radius:1px 0 0 1px"></div>
<div class="ln" style="left:967.9px;top:332.50px">26</div>
<div class="icw" style="left:1014.4px;top:331.40px"><svg class="ic" viewBox="0 0 12 13" width="12" height="13"><rect x="0.4" y="4.3" width="11" height="1.6" fill="#F6B37A" opacity="0.75"/><rect x="0.2" y="2.25" width="11.4" height="2.3" rx="0.5" fill="#F4740A"/><rect x="0.2" y="5.65" width="11.4" height="2.4" rx="0.5" fill="#EE6A00"/><rect x="0.8" y="2.5" width="10.2" height="0.7" fill="#FF962E"/><rect x="0.8" y="5.9" width="10.2" height="0.7" fill="#FF8A20"/><rect x="4.9" y="0.4" width="1.5" height="9.5" fill="#9E2636"/><rect x="4.9" y="0.4" width="1.5" height="1.6" fill="#C8202C"/><rect x="4.9" y="10.6" width="1.5" height="1.4" fill="#C41020"/></svg></div>
<div class="tx" style="left:1028px;top:332.50px;width:889px">        options=209b&lt;RXCSUM,TXCSUM,VLAN_MTU,VLAN_HWTAGGING,VLAN_HWCSUM,WOL_MAGIC</div>
<div class="ln" style="left:967.9px;top:345.68px">27</div>
<div class="tx" style="left:1028px;top:345.68px;width:889px">        ether 00:25:90:57:ef:5d</div>
<div class="ln" style="left:967.9px;top:358.86px">28</div>
<div class="tx" style="left:1028px;top:358.86px;width:889px">        hwaddr 00:25:90:57:ef:5d</div>
<div class="ln" style="left:967.9px;top:372.04px">29</div>
<div class="tx" style="left:1028px;top:372.04px;width:889px">        nd6 options=9&lt;PERFORMNUD,IFDISABLED&gt;</div>
<div class="ln" style="left:967.9px;top:385.22px">30</div>
<div class="tx" style="left:1028px;top:385.22px;width:889px">        media: Ethernet autoselect</div>
<div class="ln" style="left:967.9px;top:398.40px">31</div>
<div class="tx" style="left:1028px;top:398.40px;width:889px">        status: no carrier</div>
<div class="ln" style="left:967.9px;top:411.58px">32</div>
<div class="tx" style="left:1028px;top:411.58px;width:889px">lo0: flags=8049&lt;UP,LOOPBACK,RUNNING,MULTICAST&gt; metric 0 mtu 16384</div>
<div class="ln" style="left:967.9px;top:424.76px">33</div>
<div class="tx" style="left:1028px;top:424.76px;width:889px">        options=600003&lt;RXCSUM,TXCSUM,RXCSUM_IPV6,TXCSUM_IPV6&gt;</div>
<div class="ln" style="left:967.9px;top:437.94px">34</div>
<div class="tx" style="left:1028px;top:437.94px;width:889px">        inet6 ::1 prefixlen 128</div>
<div class="ln" style="left:967.9px;top:451.12px">35</div>
<div class="tx" style="left:1028px;top:451.12px;width:889px">        inet6 fe80::1%lo0 prefixlen 64 scopeid 0x5</div>
<div class="ln" style="left:967.9px;top:464.30px">36</div>
<div class="tx" style="left:1028px;top:464.30px;width:889px">        inet 127.0.0.1 netmask 0xff000000</div>
<div class="ln" style="left:967.9px;top:477.48px">37</div>
<div class="tx" style="left:1028px;top:477.48px;width:889px">        nd6 options=21&lt;PERFORMNUD,AUTO_LINKLOCAL&gt;</div>
<div class="ln" style="left:967.9px;top:490.66px">38</div>
<div class="tx" style="left:1028px;top:490.66px;width:889px">        groups: lo</div>
<div class="ln" style="left:967.9px;top:503.84px">39</div>
<div class="tx" style="left:1028px;top:503.84px;width:889px">bridge0: flags=8843&lt;UP,BROADCAST,RUNNING,SIMPLEX,MULTICAST&gt; metric 0 mtu 1500</div>
<div class="ln" style="left:967.9px;top:517.02px">40</div>
<div class="tx" style="left:1028px;top:517.02px;width:889px">        ether 02:3e:9f:bf:18:00</div>
<div class="ln" style="left:967.9px;top:530.20px">41</div>
<div class="tx" style="left:1028px;top:530.20px;width:889px">        nd6 options=1&lt;PERFORMNUD&gt;</div>
<div class="ln" style="left:967.9px;top:543.38px">42</div>
<div class="tx" style="left:1028px;top:543.38px;width:889px">        groups: bridge</div>
<div class="bd" style="left:1027.5px;width:889.5px;top:555.46px;background:#F0F0FC"></div>
<div class="ln" style="left:967.9px;top:556.56px">43</div>
<div class="tx g" style="left:1028px;top:556.56px;width:889px">        id 00:00:00:00:00:00 priority 32768 hellotime 2 fwddelay 15</div>
<div class="ln" style="left:967.9px;top:569.74px">44</div>
<div class="tx" style="left:1028px;top:569.74px;width:889px">        maxage 20 holdcnt 6 proto rstp maxaddr 2000 timeout 1200</div>
<div class="ln" style="left:967.9px;top:582.92px">45</div>
<div class="tx" style="left:1028px;top:582.92px;width:889px">        root id 00:00:00:00:00:00 priority 32768 ifcost 0 port 0</div>
<div class="bd" style="left:1027.5px;width:889.5px;top:595.00px;background:#D8FFD8"></div>
<div class="ln" style="left:967.9px;top:596.10px">46</div>
<div class="icw" style="left:1014.4px;top:595.00px"><svg class="ic" viewBox="0 0 12 13" width="12" height="13"><path d="M3.9 0.4h4.6v3.6h3.5v4.6h-3.5v3.6h-4.6v-3.6h-3.6v-4.6h3.6z" fill="#0C7C0C"/><path d="M4.7 1.2h3v3.6h3.5v3h-3.5v3.6h-3v-3.6h-3.6v-3h3.6z" fill="#10A010"/><path d="M5.2 1.7h2v1.4h-2z" fill="#5CD05C"/></svg></div>
<div class="tx" style="left:1028px;top:596.10px;width:889px">        member: tap0 flags=143&lt;LEARNING,DISCOVER,AUTOEDGE,AUTOPTP&gt;</div>
<div class="bd" style="left:1027.5px;width:889.5px;top:608.18px;background:#D8FFD8"></div>
<div class="ln" style="left:967.9px;top:609.28px">47</div>
<div class="icw" style="left:1014.4px;top:608.18px"><svg class="ic" viewBox="0 0 12 13" width="12" height="13"><path d="M3.9 0.4h4.6v3.6h3.5v4.6h-3.5v3.6h-4.6v-3.6h-3.6v-4.6h3.6z" fill="#0C7C0C"/><path d="M4.7 1.2h3v3.6h3.5v3h-3.5v3.6h-3v-3.6h-3.6v-3h3.6z" fill="#10A010"/><path d="M5.2 1.7h2v1.4h-2z" fill="#5CD05C"/></svg></div>
<div class="tx" style="left:1028px;top:609.28px;width:889px">                ifmaxaddr 0 port 9 priority 128 path cost 2000000</div>
<div class="ln" style="left:967.9px;top:622.46px">48</div>
<div class="tx" style="left:1028px;top:622.46px;width:889px">        member: vnet0:2 flags=143&lt;LEARNING,DISCOVER,AUTOEDGE,AUTOPTP&gt;</div>
<div class="ln" style="left:967.9px;top:635.64px">49</div>
<div class="tx" style="left:1028px;top:635.64px;width:889px">                ifmaxaddr 0 port 8 priority 128 path cost 2000</div>
<div class="ln" style="left:967.9px;top:648.82px">50</div>
<div class="tx" style="left:1028px;top:648.82px;width:889px">        member: vnet0:1 flags=143&lt;LEARNING,DISCOVER,AUTOEDGE,AUTOPTP&gt;</div>
<div class="ln" style="left:967.9px;top:662.00px">51</div>
<div class="tx" style="left:1028px;top:662.00px;width:889px">                ifmaxaddr 0 port 7 priority 128 path cost 2000</div>
<div class="bd" style="left:1027.5px;width:889.5px;top:674.08px;background:#E7E798"></div>
<div class="hl" style="left:1134.20px;width:19.00px;top:675.18px"></div>
<div class="ln" style="left:967.9px;top:675.18px">52</div>
<div class="icw" style="left:1014.4px;top:674.08px"><svg class="ic" viewBox="0 0 12 13" width="12" height="13"><rect x="0.4" y="4.3" width="11" height="1.6" fill="#F6B37A" opacity="0.75"/><rect x="0.2" y="2.25" width="11.4" height="2.3" rx="0.5" fill="#F4740A"/><rect x="0.2" y="5.65" width="11.4" height="2.4" rx="0.5" fill="#EE6A00"/><rect x="0.8" y="2.5" width="10.2" height="0.7" fill="#FF962E"/><rect x="0.8" y="5.9" width="10.2" height="0.7" fill="#FF8A20"/><rect x="4.9" y="0.4" width="1.5" height="9.5" fill="#9E2636"/><rect x="4.9" y="0.4" width="1.5" height="1.6" fill="#C8202C"/><rect x="4.9" y="10.6" width="1.5" height="1.4" fill="#C41020"/></svg></div>
<div class="tx" style="left:1028px;top:675.18px;width:889px">        member: <i>em0</i> flags=143&lt;LEARNING,DISCOVER,AUTOEDGE,AUTOPTP&gt;</div>
<div class="bd" style="left:1027.5px;width:889.5px;top:687.26px;background:#E7E798"></div>
<div class="hl" style="left:1246.40px;width:5.80px;top:688.36px"></div>
<div class="hl" style="left:1411.40px;width:32.20px;top:688.36px"></div>
<div class="ln" style="left:967.9px;top:688.36px">53</div>
<div class="icw" style="left:1014.4px;top:687.26px"><svg class="ic" viewBox="0 0 12 13" width="12" height="13"><rect x="0.4" y="4.3" width="11" height="1.6" fill="#F6B37A" opacity="0.75"/><rect x="0.2" y="2.25" width="11.4" height="2.3" rx="0.5" fill="#F4740A"/><rect x="0.2" y="5.65" width="11.4" height="2.4" rx="0.5" fill="#EE6A00"/><rect x="0.8" y="2.5" width="10.2" height="0.7" fill="#FF962E"/><rect x="0.8" y="5.9" width="10.2" height="0.7" fill="#FF8A20"/><rect x="4.9" y="0.4" width="1.5" height="9.5" fill="#9E2636"/><rect x="4.9" y="0.4" width="1.5" height="1.6" fill="#C8202C"/><rect x="4.9" y="10.6" width="1.5" height="1.4" fill="#C41020"/></svg></div>
<div class="tx" style="left:1028px;top:688.36px;width:889px">                ifmaxaddr 0 port <i>3</i> priority 128 path cost <i>20000</i></div>
<div class="bd" style="left:1027.5px;width:889.5px;top:700.44px;background:#E7E798"></div>
<div class="hl" style="left:1556.60px;width:360.40px;top:701.54px;border-radius:1px 0 0 1px"></div>
<div class="ln" style="left:967.9px;top:701.54px">54</div>
<div class="icw" style="left:1014.4px;top:700.44px"><svg class="ic" viewBox="0 0 12 13" width="12" height="13"><rect x="0.4" y="4.3" width="11" height="1.6" fill="#F6B37A" opacity="0.75"/><rect x="0.2" y="2.25" width="11.4" height="2.3" rx="0.5" fill="#F4740A"/><rect x="0.2" y="5.65" width="11.4" height="2.4" rx="0.5" fill="#EE6A00"/><rect x="0.8" y="2.5" width="10.2" height="0.7" fill="#FF962E"/><rect x="0.8" y="5.9" width="10.2" height="0.7" fill="#FF8A20"/><rect x="4.9" y="0.4" width="1.5" height="9.5" fill="#9E2636"/><rect x="4.9" y="0.4" width="1.5" height="1.6" fill="#C8202C"/><rect x="4.9" y="10.6" width="1.5" height="1.4" fill="#C41020"/></svg></div>
<div class="tx" style="left:1028px;top:701.54px;width:889px">vnet0:1: flags=8943&lt;UP,BROADCAST,RUNNING,PROMISC,SIMPLEX,MULTICAST&gt; metric 0 mtu</div>
<div class="ln" style="left:967.9px;top:714.72px">55</div>
<div class="tx" style="left:1028px;top:714.72px;width:889px">        description: associated with jail: transmission</div>
<div class="ln" style="left:967.9px;top:727.90px">56</div>
<div class="tx" style="left:1028px;top:727.90px;width:889px">        options=8&lt;VLAN_MTU&gt;</div>
<div style="left:946px;top:0;width:17px;height:742px;background:#fff"></div>
<div style="left:947.3px;top:0;width:15.6px;height:742px;background:#F0F0F0"></div>
<div style="left:948px;top:16px;width:12px;height:493px;background:#CDCDCD"></div>
<svg style="position:absolute;left:947px;top:2px" width="15" height="14" viewBox="0 0 15 14"><path d="M4.4 9.1L7.1 5.8L9.8 9.1" fill="none" stroke="#505050" stroke-width="2"/></svg>
<svg style="position:absolute;left:947px;top:729px" width="15" height="14" viewBox="0 0 15 14"><path d="M4.4 5.9L7.1 9.2L9.8 5.9" fill="none" stroke="#505050" stroke-width="2"/></svg>
<div style="left:1917px;top:0;width:3px;height:742px;background:#fff"></div>
<div style="left:1918.3px;top:16px;width:2px;height:493px;background:#CDCDCD"></div>
<div style="left:1245.50px;top:555.46px;width:1px;height:13.18px;background:#8040E0"></div>
<div style="left:0;top:0;width:1920px;height:1.9px;background:#989898"></div>
<div style="left:962.9px;top:0;width:11.1px;height:742px;background:#F6F6F6"></div>
<div style="left:962.9px;top:0;width:1.2px;height:742px;background:#7A7A7A"></div>
<div style="left:972.8px;top:0;width:1.2px;height:742px;background:#7A7A7A"></div>
<svg style="position:absolute;left:964px;top:0" width="9" height="742"><defs><pattern id="dp" x="0" y="0.35" width="9" height="3.3" patternUnits="userSpaceOnUse"><rect x="0.4" y="0.3" width="1.2" height="1.6" fill="#fff"/><rect x="3.6" y="0.3" width="1.2" height="1.6" fill="#fff"/><rect x="1.3" y="0.5" width="1.4" height="1.6" fill="#848484"/><rect x="4.5" y="0.5" width="1.4" height="1.6" fill="#848484"/></pattern></defs><rect width="9" height="742" fill="url(#dp)"/></svg>
</body></html>
